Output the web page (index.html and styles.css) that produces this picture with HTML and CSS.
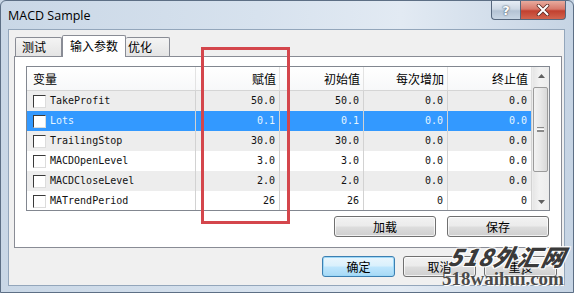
FILE: index.html
```html
<!DOCTYPE html>
<html lang="zh-CN">
<head>
<meta charset="utf-8">
<title>MACD Sample</title>
<link rel="stylesheet" href="styles.css">
</head>
<body>
<div class="window">
  <div class="titlebar">
    <span class="title">MACD Sample</span>
    <div class="caption-btns">
      <div class="cap help">?</div>
      <div class="cap close">
        <svg width="14" height="12" viewBox="0 0 14 12"><path d="M2.5 1.5 L11.5 10.5 M11.5 1.5 L2.5 10.5" stroke="#5a2a24" stroke-width="3.6" stroke-linecap="round"/><path d="M2.5 1.5 L11.5 10.5 M11.5 1.5 L2.5 10.5" stroke="#fff" stroke-width="2" stroke-linecap="round"/></svg>
      </div>
    </div>
  </div>
  <div class="client">
    <div class="tabs">
      <div class="tab">测试</div>
      <div class="tab active">输入参数</div>
      <div class="tab">优化</div>
    </div>
    <div class="panel">
      <div class="list">
        <div class="table">
          <div class="row head">
            <div class="cell left">变量</div>
            <div class="cell">赋值</div>
            <div class="cell">初始值</div>
            <div class="cell">每次增加</div>
            <div class="cell">终止值</div>
          </div>
          <div class="row alt">
            <div class="cell left"><span class="chk"></span>TakeProfit</div>
            <div class="cell">50.0</div><div class="cell">50.0</div><div class="cell">0.0</div><div class="cell">0.0</div>
          </div>
          <div class="row sel">
            <div class="cell left"><span class="chk"></span>Lots</div>
            <div class="cell">0.1</div><div class="cell">0.1</div><div class="cell">0.0</div><div class="cell">0.0</div>
          </div>
          <div class="row alt">
            <div class="cell left"><span class="chk"></span>TrailingStop</div>
            <div class="cell">30.0</div><div class="cell">30.0</div><div class="cell">0.0</div><div class="cell">0.0</div>
          </div>
          <div class="row">
            <div class="cell left"><span class="chk"></span>MACDOpenLevel</div>
            <div class="cell">3.0</div><div class="cell">3.0</div><div class="cell">0.0</div><div class="cell">0.0</div>
          </div>
          <div class="row alt">
            <div class="cell left"><span class="chk"></span>MACDCloseLevel</div>
            <div class="cell">2.0</div><div class="cell">2.0</div><div class="cell">0.0</div><div class="cell">0.0</div>
          </div>
          <div class="row">
            <div class="cell left"><span class="chk"></span>MATrendPeriod</div>
            <div class="cell">26</div><div class="cell">26</div><div class="cell">0</div><div class="cell">0</div>
          </div>
        </div>
        <div class="vscroll">
          <div class="arrow"><svg width="7" height="4" viewBox="0 0 7 4"><path d="M0 4 L3.5 0 L7 4 Z" fill="#606060"/></svg></div>
          <div class="track">
            <div class="thumb"><span class="grip"></span></div>
          </div>
          <div class="arrow"><svg width="7" height="4" viewBox="0 0 7 4"><path d="M0 0 L3.5 4 L7 0 Z" fill="#606060"/></svg></div>
        </div>
      </div>
      <div class="panel-actions">
        <button class="btn wide">加载</button>
        <button class="btn wide">保存</button>
      </div>
    </div>
    <div class="dialog-actions">
      <button class="btn default">确定</button>
      <button class="btn">取消</button>
      <button class="btn">重设</button>
    </div>
  </div>
  <div class="highlight"></div>
  <div class="watermark">
    <div class="wm-cn">518外汇网</div>
    <div class="wm-en">518waihui.com</div>
  </div>
</div>
</body>
</html>
```

FILE: styles.css
```css
* { box-sizing: border-box; }
html, body { margin: 0; padding: 0; }
body { width: 574px; height: 293px; overflow: hidden; background: #c8d6e5; }

.window {
  position: relative;
  width: 574px;
  height: 293px;
  border: 1px solid #5d6f85;
  border-radius: 6px 6px 0 0;
  background: linear-gradient(to right, #c9d7e6 0%, #d7e2ee 45%, #e2eaf3 70%, #c6d4e4 100%);
  overflow: hidden;
}

.titlebar {
  height: 28px;
  display: flex;
  align-items: flex-start;
  justify-content: space-between;
}
.title {
  font-family: "Open Sans", "Noto Sans", sans-serif;
  font-size: 12.5px;
  color: #000;
  margin: 6px 0 0 7px;
  line-height: 17px;
}
.caption-btns { display: flex; margin-right: 7px; }
.cap {
  height: 19px;
  border: 1px solid #56677d;
  border-top: none;
  display: flex;
  align-items: center;
  justify-content: center;
}
.help {
  width: 29px;
  border-right: none;
  border-radius: 0 0 0 4px;
  background: linear-gradient(#e6edf5 0%, #cdd8e4 45%, #b4c3d4 55%, #c9d6e4 100%);
  color: #fff;
  font-family: "DejaVu Sans", sans-serif;
  font-weight: bold;
  font-size: 13px;
  text-shadow: 0 0 2px #4a5868, 0 0 1px #4a5868;
}
.close {
  width: 46px;
  border-radius: 0 0 4px 0;
  background: linear-gradient(#e8ab9e 0%, #d7796b 45%, #c2402f 55%, #d2654f 100%);
}

.client {
  margin-left: 7px;
  width: 557px;
  height: 257px;
  border: 1px solid #93a6bb;
  background: #f0f0f0;
  padding-top: 5px;
  font-family: "Noto Sans CJK SC", "Noto Sans", sans-serif;
  font-size: 12px;
}

.tabs {
  display: flex;
  align-items: flex-end;
  height: 21px;
  margin-left: 6px;
  position: relative;
  z-index: 2;
}
.tab {
  height: 19px;
  width: 47px;
  border: 1px solid #898c95;
  border-bottom: none;
  border-radius: 2px 2px 0 0;
  background: linear-gradient(#f4f4f4, #e4e4e4);
  padding-left: 6px;
  line-height: 18px;
  color: #000;
}
.tab + .tab { border-left: none; }
.tab.active {
  width: 64px;
  height: 22px;
  margin-bottom: -1px;
  background: #fff;
  border-left: 1px solid #898c95;
  padding-left: 7px;
  line-height: 20px;
}
.tab.active + .tab { border-left: none; width: 44px; padding-left: 2px; }

.panel {
  margin-left: 5px;
  width: 548px;
  height: 192px;
  border: 1px solid #898c95;
  background: #fff;
  padding: 9px 12px 0 11px;
  position: relative;
  z-index: 1;
}

.list {
  width: 524px;
  height: 145px;
  border: 1px solid #828790;
  display: flex;
  overflow: hidden;
  background: #fff;
}
.table { width: 505px; }
.row {
  display: grid;
  grid-template-columns: 169px 84px 84px 84px 84px;
  height: 20px;
  font-family: "DejaVu Sans Mono", "Liberation Mono", monospace;
  font-size: 10px;
  color: #111;
}
.row.alt { background: #ededed; }
.row.sel { background: #3399ff; color: #e6f6ff; }
.cell {
  border-right: 1px solid #d2d2d2;
  text-align: right;
  padding-right: 4px;
  line-height: 20px;
  white-space: nowrap;
}
.cell.left {
  text-align: left;
  padding-left: 6px;
  display: flex;
  align-items: center;
}
.row.head {
  height: 24px;
  background: linear-gradient(#ffffff, #f7f8f9);
  border-bottom: 1px solid #d5d5d5;
  font-family: "Noto Sans CJK SC", "Noto Sans", sans-serif;
  font-size: 12px;
  color: #000;
}
.row.head .cell { border-right-color: #e3e3e3; line-height: 23px; padding-right: 3px; }
.row.head .cell.left { padding-left: 6px; }

.chk {
  display: inline-block;
  width: 13px;
  height: 13px;
  background: #fff;
  border-top: 1px solid #3a3a3a;
  border-left: 1px solid #3a3a3a;
  border-right: 1px solid #dcdcdc;
  border-bottom: 1px solid #dcdcdc;
  margin-right: 4px;
  flex: none;
}

.vscroll {
  width: 17px;
  height: 143px;
  display: flex;
  flex-direction: column;
  background: linear-gradient(to right, #e6e6e6, #f2f2f2 40%, #ececec);
  border-left: 1px solid #ececec;
}
.arrow {
  height: 17px;
  display: flex;
  align-items: center;
  justify-content: center;
  flex: none;
}
.track { flex: 1; padding-top: 3px; }
.thumb {
  width: 15px;
  height: 85px;
  border: 1px solid #9b9b9b;
  border-radius: 2px;
  background: linear-gradient(to right, #f3f3f3, #e8e8e8 50%, #d8d8d8);
  display: flex;
  align-items: center;
  justify-content: center;
}
.grip {
  width: 7px;
  height: 5px;
  border-top: 1px solid #8a8a8a;
  border-bottom: 1px solid #8a8a8a;
  background: linear-gradient(#fff 0, #fff 1px, #8a8a8a 1px, #8a8a8a 2px, transparent 2px);
  background-position: 0 1px;
  background-repeat: no-repeat;
}

.panel-actions {
  display: flex;
  justify-content: flex-end;
  gap: 11px;
  margin-top: 5px;
}

.btn {
  width: 73px;
  height: 21px;
  border: 1px solid #707070;
  border-radius: 3px;
  background: linear-gradient(#f2f2f2 0%, #ebebeb 48%, #dddddd 52%, #cfcfcf 100%);
  box-shadow: inset 0 0 0 1px rgba(255,255,255,0.7);
  font-family: "Noto Sans CJK SC", "Noto Sans", sans-serif;
  font-size: 12px;
  color: #000;
  padding: 0;
  line-height: 18px;
}
.btn.wide { width: 102px; }
.btn.default {
  border-color: #3c7fb1;
  background: linear-gradient(#eaf6fd 0%, #d9f0fc 48%, #bee6fd 52%, #a7d9f5 100%);
  box-shadow: inset 0 0 0 1px #9ed8f7;
}

.dialog-actions {
  display: flex;
  justify-content: flex-end;
  gap: 8px;
  margin-top: 8px;
  padding-right: 7px;
}

.highlight {
  position: absolute;
  left: 200px;
  top: 46px;
  width: 89px;
  height: 177px;
  border: 3px solid #d4464c;
  z-index: 5;
}

.watermark {
  position: absolute;
  left: 438px;
  top: 244px;
  width: 134px;
  z-index: 6;
  line-height: 1;
  white-space: nowrap;
}
.wm-cn {
  font-family: "Noto Sans CJK SC", sans-serif;
  font-weight: 900;
  font-style: italic;
  font-size: 23px;
  color: #3a3a3a;
  letter-spacing: 1px;
  margin-left: 10px;
  text-shadow: 1px 1px 0 #fff, -1px -1px 0 #fff, 1px -1px 0 #fff, -1px 1px 0 #fff;
  transform: skewX(-12deg);
}
.wm-en {
  font-family: "Liberation Serif", serif;
  font-weight: bold;
  font-size: 19px;
  color: #4a4a4a;
  margin-top: 1px;
  margin-left: 3px;
  text-shadow: 1px 1px 0 #fff;
}
```
